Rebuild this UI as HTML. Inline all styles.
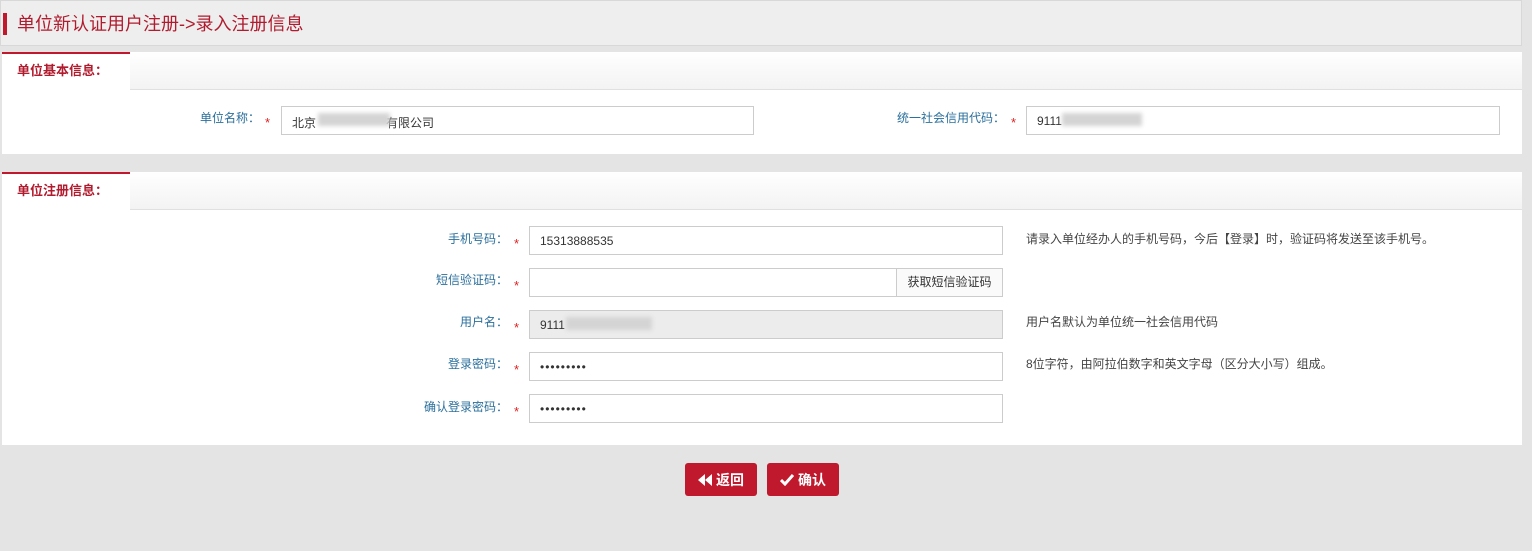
<!DOCTYPE html>
<html><head><meta charset="utf-8"><style>
*{box-sizing:border-box;margin:0;padding:0}
body{width:1532px;height:551px;background:#e4e4e4;font-family:"Liberation Sans","Noto Sans CJK SC",sans-serif;font-size:12px;position:relative;overflow:hidden}
.abs{position:absolute}
.hdr{left:0;top:0;width:1522px;height:46px;background:#eeeeee;border:1px solid #d8d8d8}
.hdr .bar{position:absolute;left:2px;top:12px;width:4px;height:22px;background:#c0182c}
.hdr .t{position:absolute;left:16px;top:9px;font-size:18px;color:#b11b2e}
.panel{left:2px;width:1520px;background:#fff}
.ph{position:absolute;left:0;top:0;width:100%;height:38px;background:linear-gradient(#fff,#f3f3f3);border-bottom:1px solid #e0e0e0}
.tab{position:absolute;left:0;top:0;width:128px;height:39px;background:#fff;border-top:2px solid #c0182c;color:#b11b2e;font-weight:bold;font-size:13px;padding:6px 0 0 15px}
.lbl{color:#2a6f9c;text-align:right;font-size:12px}
.star{color:#e02020;font-size:13px}
.inp{border:1px solid #ccc;background:#fff;height:29px;font-size:12px;color:#333;padding:7px 10px}
.hint{color:#444;font-size:12px}
.blur{background:#d4d4d4;filter:blur(2px)}
.btn{top:463px;height:33px;width:72px;background:#c0182c;border-radius:3px;color:#fff;font-size:14px;font-weight:bold;display:flex;align-items:center;justify-content:center;gap:4px}
</style></head><body>
<div class="abs hdr"><div class="bar"></div><div class="t">单位新认证用户注册-&gt;录入注册信息</div></div>

<div class="abs panel" style="top:52px;height:102px"><div class="ph"></div><div class="tab">单位基本信息：</div></div>
<div class="abs lbl" style="left:160px;top:109px;width:100px">单位名称：</div>
<div class="abs star" style="left:265px;top:115px">*</div>
<div class="abs inp" style="left:281px;top:106px;width:473px">北京<span style="display:inline-block;width:70px"></span>有限公司</div>
<div class="abs blur" style="left:318px;top:113px;width:72px;height:13px"></div>
<div class="abs lbl" style="left:860px;top:109px;width:145px">统一社会信用代码：</div>
<div class="abs star" style="left:1011px;top:115px">*</div>
<div class="abs inp" style="left:1026px;top:106px;width:474px">9111</div>
<div class="abs blur" style="left:1062px;top:113px;width:80px;height:13px"></div>

<div class="abs panel" style="top:172px;height:273px"><div class="ph"></div><div class="tab">单位注册信息：</div></div>

<div class="abs lbl" style="left:380px;top:230px;width:128px">手机号码：</div>
<div class="abs star" style="left:514px;top:236px">*</div>
<div class="abs inp" style="left:529px;top:226px;width:474px">15313888535</div>
<div class="abs hint" style="left:1026px;top:230px">请录入单位经办人的手机号码，今后【登录】时，验证码将发送至该手机号。</div>

<div class="abs lbl" style="left:380px;top:271px;width:128px">短信验证码：</div>
<div class="abs star" style="left:514px;top:278px">*</div>
<div class="abs inp" style="left:529px;top:268px;width:474px"></div>
<div class="abs" style="left:896px;top:269px;width:106px;height:27px;border-left:1px solid #ccc;background:#fafafa;color:#333;font-size:12px;text-align:center;line-height:27px">获取短信验证码</div>

<div class="abs lbl" style="left:380px;top:313px;width:128px">用户名：</div>
<div class="abs star" style="left:514px;top:320px">*</div>
<div class="abs inp" style="left:529px;top:310px;width:474px;background:#ececec">9111</div>
<div class="abs blur" style="left:566px;top:317px;width:86px;height:13px"></div>
<div class="abs hint" style="left:1026px;top:313px">用户名默认为单位统一社会信用代码</div>

<div class="abs lbl" style="left:380px;top:355px;width:128px">登录密码：</div>
<div class="abs star" style="left:514px;top:362px">*</div>
<div class="abs inp" style="left:529px;top:352px;width:474px;letter-spacing:1px">•••••••••</div>
<div class="abs hint" style="left:1026px;top:355px">8位字符，由阿拉伯数字和英文字母（区分大小写）组成。</div>

<div class="abs lbl" style="left:380px;top:398px;width:128px">确认登录密码：</div>
<div class="abs star" style="left:514px;top:404px">*</div>
<div class="abs inp" style="left:529px;top:394px;width:474px;letter-spacing:1px">•••••••••</div>

<div class="abs btn" style="left:685px"><svg width="14" height="12" viewBox="0 0 14 12"><path d="M7 0L0 6l7 6zM14 0L7 6l7 6z" fill="#fff"/></svg>返回</div>
<div class="abs btn" style="left:767px"><svg width="14" height="12" viewBox="0 0 14 12"><path d="M1 6l4 4 8-9" stroke="#fff" stroke-width="3" fill="none"/></svg>确认</div>
</body></html>
